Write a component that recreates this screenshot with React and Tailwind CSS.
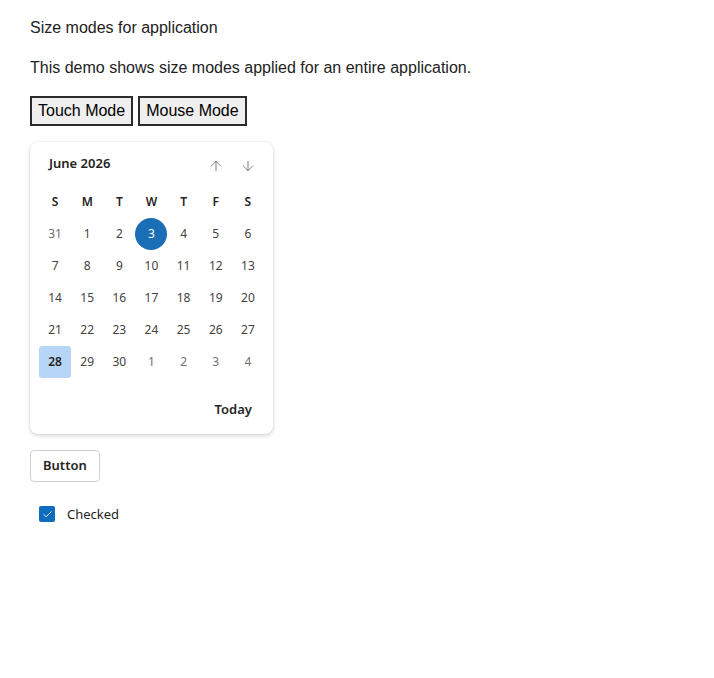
import React, { useState } from "react";
import { ArrowUp, ArrowDown, Check } from "lucide-react";

const WEEKDAYS = ["S", "M", "T", "W", "T", "F", "S"];

// June 2026, padded with the trailing days of May and leading days of July
const buildDays = () => {
  const days = [{ n: 31, out: true }];
  for (let i = 1; i <= 30; i++) days.push({ n: i, out: false });
  for (let i = 1; i <= 4; i++) days.push({ n: i, out: true });
  return days;
};

const Calendar = () => {
  const days = buildDays();
  return (
    <div className="w-[243px] rounded-lg bg-white shadow-[0_0_2px_rgba(0,0,0,0.12),0_2px_4px_rgba(0,0,0,0.14)] px-[9px] pt-[6px] pb-[14px] font-['Noto_Sans',sans-serif] text-[#242424]">
      <div className="flex items-center justify-between h-[32px] pl-[10px]">
        <span className="text-[13px] font-semibold">June 2026</span>
        <div className="flex pt-[4px]">
          <button className="w-[32px] h-[32px] flex items-center justify-center text-[#6b6b6b]">
            <ArrowUp size={16} strokeWidth={1.3} />
          </button>
          <button className="w-[32px] h-[32px] flex items-center justify-center text-[#6b6b6b]">
            <ArrowDown size={16} strokeWidth={1.3} />
          </button>
        </div>
      </div>
      <div className="grid grid-cols-7 mt-[6px]">
        {WEEKDAYS.map((d, i) => (
          <div key={i} className="h-[32px] flex items-center justify-center text-[12px] font-semibold">
            {d}
          </div>
        ))}
        {days.map((d, i) => {
          const today = !d.out && d.n === 3;
          const selected = !d.out && d.n === 28;
          return (
            <div key={i} className="h-[32px] flex items-center justify-center">
              <div
                className={
                  "w-[32px] h-[32px] flex items-center justify-center text-[12px] " +
                  (today
                    ? "rounded-full bg-[#1a6eb5] text-white"
                    : selected
                    ? "rounded-[3px] bg-[#b7d6f7] font-semibold text-[#242424]"
                    : d.out
                    ? "text-[#707070]"
                    : "text-[#424242]")
                }
              >
                {d.n}
              </div>
            </div>
          );
        })}
      </div>
      <div className="flex justify-end mt-[22px] pr-[12px]">
        <span className="text-[13px] font-semibold">Today</span>
      </div>
    </div>
  );
};

export default function App() {
  const [mode, setMode] = useState("mouse");
  return (
    <div className="min-h-screen bg-white px-[30px] pt-[18px] font-['Liberation_Sans',Arial,sans-serif] text-[16px] text-[#222]">
      <p className="leading-[20px]">Size modes for application</p>
      <p className="leading-[20px] mt-[20px]">This demo shows size modes applied for an entire application.</p>
      <div className="flex gap-[5px] mt-[18px]">
        <button
          onClick={() => setMode("touch")}
          className="h-[30px] px-[6px] border-2 border-[#2b2b2b] bg-[#efefef] text-[16px] text-black"
        >
          Touch Mode
        </button>
        <button
          onClick={() => setMode("mouse")}
          className="h-[30px] px-[6px] border-2 border-[#2b2b2b] bg-[#efefef] text-[16px] text-black"
        >
          Mouse Mode
        </button>
      </div>
      <div className="mt-[16px]" data-mode={mode}>
        <Calendar />
      </div>
      <button className="mt-[16px] h-[32px] px-[12px] rounded-[4px] border border-[#d1d1d1] bg-white text-[13px] font-semibold text-[#242424] font-['Noto_Sans',sans-serif]">
        Button
      </button>
      <label className="mt-[23px] flex items-center gap-[12px] pl-[9px] font-['Noto_Sans',sans-serif] text-[13px] text-[#242424]">
        <span className="w-[16px] h-[16px] rounded-[2px] bg-[#0f6cbd] flex items-center justify-center text-white">
          <Check size={11} strokeWidth={2} />
        </span>
        Checked
      </label>
    </div>
  );
}
